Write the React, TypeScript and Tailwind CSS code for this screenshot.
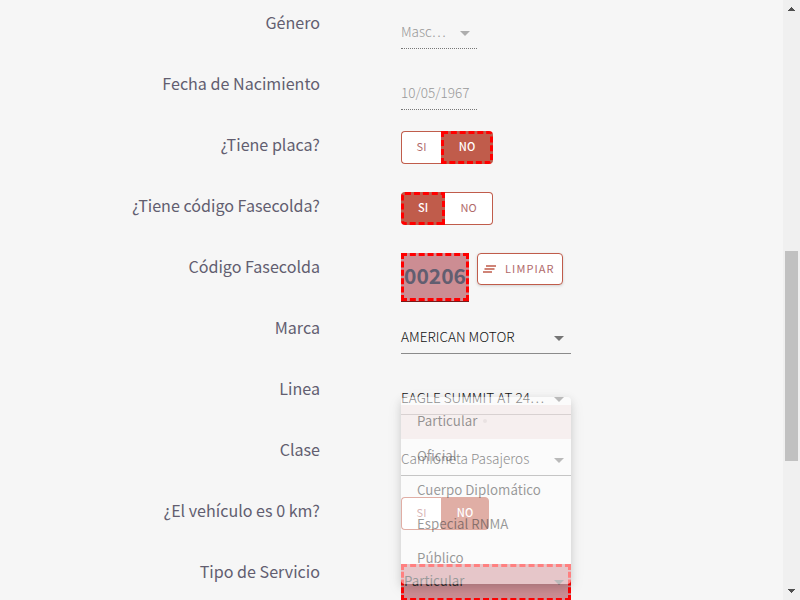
import type { ReactNode } from "react";

function Row({ label, children }: { label: string; children: ReactNode }) {
  return (
    <div className="flex h-[61px] shrink-0 items-start">
      <div className="w-80 text-right text-[16.1px] leading-[26px] whitespace-nowrap text-[#625e70]">{label}</div>
      <div className="ml-[81px] flex items-start">{children}</div>
    </div>
  );
}

function Caret({ className = "" }: { className?: string }) {
  return <svg className={`h-[5px] w-[10px] shrink-0 ${className}`} viewBox="0 0 10 5" fill="currentColor"><path d="M0 0h10L5 5z" /></svg>;
}

function Select({ value, className = "text-[#111]" }: { value: string; className?: string }) {
  return (
    <div className={`flex h-10 w-[170px] items-start border-b border-[#8b8b8b] ${className}`}>
      <span className="flex-1 pt-[7px] text-[13.6px] leading-[30px] font-light whitespace-nowrap">{value}</span>
      <Caret className="mt-[22px] mr-[7px] text-[#757575]" />
    </div>
  );
}

const active = "border-[3px] border-dashed border-[#ff0000] bg-[#c05c4b] font-medium text-white";
const idle = "border border-[#c05c4b] bg-white text-[#b06a6a]";

function Toggle({ selected, faded = false }: { selected: "SI" | "NO"; faded?: boolean }) {
  const si = selected === "SI";
  const on = faded ? "border border-[#c05c4b] bg-[#c05c4b] font-medium text-white" : active;
  return (
    <div className="flex h-[33px] text-[11px] leading-4">
      <div className={`flex items-center justify-center rounded-l pb-[3px] ${si ? `w-11 ${on}` : `w-10 border-r-0 ${idle}`}`}>SI</div>
      <div className={`flex items-center justify-center rounded-r pb-[3px] ${si ? `w-12 border-l-0 ${idle}` : faded ? `w-12 ${on}` : `w-[52px] ${on}`}`}>NO</div>
    </div>
  );
}

function ServiceMenu() {
  const options = ["Particular", "Oficial", "Cuerpo Diplomático", "Especial RNMA", "Público"];
  return (
    <div className="absolute top-[397px] left-[401px] h-[187px] w-[170px] rounded bg-white/50 pt-2 text-[13.3px] text-[#333]/50 shadow-[0_3px_8px_rgba(0,0,0,0.12),0_5px_16px_rgba(0,0,0,0.08)]">
      {options.map((option, i) => (
        <div key={option} className={`flex h-[34.2px] items-center pb-[1.4px] pl-4 leading-5 ${i === 0 ? "bg-[#efdfdf]/45" : ""}`}>
          {option}
          {i === 0 && <span className="ml-[6px] size-1 rounded-full bg-black/5" />}
        </div>
      ))}
    </div>
  );
}

export default function App() {
  return (
    <div className="relative flex h-[600px] w-[800px] overflow-hidden bg-[#f6f6f6] font-['Noto_Sans_CJK_SC',sans-serif]">
      <main className="flex flex-1 flex-col overflow-hidden pt-[9px]">
        <Row label="Género">
          <div className="flex h-10 w-[76px] items-start border-b border-dotted border-[#777] text-[#999]">
            <span className="flex-1 pt-[7px] text-[13.5px] leading-[30px] font-light">Masc…</span>
            <Caret className="mt-[22px] mr-[7px] text-[#adadad]" />
          </div>
        </Row>
        <Row label="Fecha de Nacimiento">
          <div className="h-10 w-[76px] border-b border-dotted border-[#777] pt-[7px] text-[13.5px] leading-[30px] font-light text-[#999]">10/05/1967</div>
        </Row>
        <Row label="¿Tiene placa?"><Toggle selected="NO" /></Row>
        <Row label="¿Tiene código Fasecolda?"><Toggle selected="SI" /></Row>
        <Row label="Código Fasecolda">
          <div className="flex h-12 w-[68px] items-center justify-center border-[3px] border-dashed border-[#ff0000] bg-[#cc8d93] pb-1 text-[21px] leading-7 font-bold text-[#625e70] shadow-[0_1px_0_#7a1a1a]">00206</div>
          <div className="ml-2 flex h-8 w-[86px] items-center rounded border border-[#c05c4b] bg-white pl-[5px] text-[11px] leading-4 tracking-[1.1px] text-[#b06a6a] shadow-[0_1px_3px_rgba(0,0,0,0.15)]">
            <svg className="mr-[9px] h-[8px] w-[13px]" viewBox="0 0 13 8" stroke="#c05c4b" strokeWidth="1.3"><path d="M3 1h10M1.5 4h10M0 7h9" /></svg>
            <span className="pb-[2px]">LIMPIAR</span>
          </div>
        </Row>
        <Row label="Marca"><Select value="AMERICAN MOTOR" /></Row>
        <Row label="Linea"><Select value="EAGLE SUMMIT AT 24…" /></Row>
        <Row label="Clase"><Select value="Camioneta Pasajeros" /></Row>
        <Row label="¿El vehículo es 0 km?"><Toggle selected="NO" faded /></Row>
        <Row label="Tipo de Servicio">
          <div className="mt-[6px] flex h-[37px] w-[170px] items-center border-[3px] border-dashed border-[#ff0000] bg-[#cc8d93] text-[13.3px] text-[#333]">
            <span className="flex-1 pb-1 leading-5">Particular</span>
            <Caret className="mr-1 text-[#757575]" />
          </div>
        </Row>
      </main>
      <aside className="flex w-[17px] flex-col items-center bg-[#f0f0f0]">
        <svg className="mt-[7px] h-1 w-[7px] shrink-0" viewBox="0 0 7 4" fill="#505050" shapeRendering="crispEdges"><path d="M3 0h1v1h1v1h1v1h1v1H0V3h1V2h1V1h1z" /></svg>
        <div className="mt-60 h-[210px] w-[13px] bg-[#c1c1c1]" />
        <svg className="mt-auto mb-[7px] h-1 w-[7px] shrink-0" viewBox="0 0 7 4" fill="#505050" shapeRendering="crispEdges"><path d="M0 0h7v1H6v1H5v1H4v1H3V3H2V2H1V1H0z" /></svg>
      </aside>
      <ServiceMenu />
    </div>
  );
}
